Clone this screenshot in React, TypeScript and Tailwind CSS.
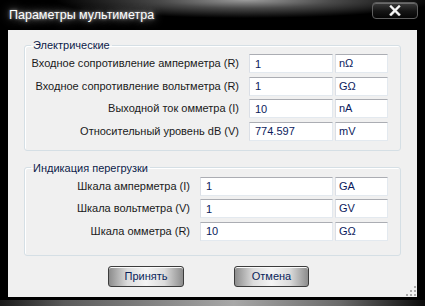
import React from 'react';

const font = "font-['Liberation_Sans',Arial,sans-serif]";

type Row = { label: string; value: string; unit: string };

const electric: Row[] = [
  { label: 'Входное сопротивление амперметра (R)', value: '1', unit: 'nΩ' },
  { label: 'Входное сопротивление вольтметра (R)', value: '1', unit: 'GΩ' },
  { label: 'Выходной ток омметра (I)', value: '10', unit: 'nA' },
  { label: 'Относительный уровень dB (V)', value: '774.597', unit: 'mV' },
];

const overload: Row[] = [
  { label: 'Шкала амперметра (I)', value: '1', unit: 'GA' },
  { label: 'Шкала вольтметра (V)', value: '1', unit: 'GV' },
  { label: 'Шкала омметра (R)', value: '10', unit: 'GΩ' },
];

function Field({ row, labelW, inputW }: { row: Row; labelW: string; inputW: string }) {
  return (
    <div className="flex h-[19px] items-center">
      <div className={`${labelW} shrink-0 whitespace-nowrap text-right text-[#1a1a1a]`}>{row.label}</div>
      <div
        className={`${inputW} ml-[10px] flex h-full shrink-0 items-center border border-[#e3e9ef] border-t-[#abadb3] border-l-[#dbdfe6] bg-white pl-[5px] pt-[1px] text-[#0b1a5c]`}
      >
        {row.value}
      </div>
      <div className="ml-[2px] flex h-full w-[53px] shrink-0 items-start border border-[#e3e9ef] border-t-[#abadb3] border-l-[#dbdfe6] bg-white pl-[3px] text-[#0b1a5c]">
        {row.unit}
      </div>
    </div>
  );
}

function Group({ title, children, className }: { title: string; children: React.ReactNode; className?: string }) {
  return (
    <fieldset className={`rounded-[3px] border border-[#d5dfe5] shadow-[inset_1px_1px_0_#fff] ${className ?? ''}`}>
      <legend className="ml-[6px] px-[2px] leading-[14px] text-[#0d1c4a]">{title}</legend>
      {children}
    </fieldset>
  );
}

function GlassButton({ label, w }: { label: string; w: string }) {
  return (
    <button
      className={`${w} h-[21px] rounded-[3px] border border-[#3c3c3c] bg-[linear-gradient(to_right,#8c8c8c,#dcdcdc_25%,#f4f4f4_50%,#dcdcdc_75%,#8c8c8c)] text-[#0a1e5a] shadow-[inset_0_1px_0_#fafafa]`}
    >
      {label}
    </button>
  );
}

export default function App() {
  return (
    <div className={`${font} flex h-[306px] w-[425px] flex-col overflow-hidden bg-black text-[11px]`}>
      {/* title bar */}
      <div className="flex h-[30px] shrink-0 justify-between bg-[radial-gradient(ellipse_45%_60%_at_58%_0%,#9c9c9c_0%,#4a4a4a_45%,#000_100%)]">
        <div className="flex items-center pl-[9px] text-[12.5px] text-white [text-shadow:0_0_8px_rgba(220,220,220,0.9),0_0_3px_rgba(255,255,255,0.6)]">
          Параметры мультиметра
        </div>
        <button className="mr-[7px] mt-[2px] flex h-[17px] w-[46px] items-center justify-center rounded-[4px] border border-[#5e5e5e] bg-[linear-gradient(to_bottom,#3c3c3c,#141414_55%,#050505)] shadow-[inset_0_1px_0_#6a6a6a]">
          <svg width="12" height="11" viewBox="0 0 12 11">
            <path d="M2 1.5 L10 9.5 M10 1.5 L2 9.5" stroke="#2a2a2a" strokeWidth="4" strokeLinecap="square" />
            <path d="M2 1.5 L10 9.5 M10 1.5 L2 9.5" stroke="#f4f4f4" strokeWidth="2.4" strokeLinecap="square" />
          </svg>
        </button>
      </div>

      {/* client area */}
      <div className="relative mx-[8px] flex h-[267px] shrink-0 flex-col bg-[#f0f0f0] px-[16px] pt-[8px]">
        <Group title="Электрические" className="pb-[9px]">
          <div className="flex flex-col gap-[3.5px] pt-[2px]">
            {electric.map((r) => (
              <Field key={r.label} row={r} labelW="w-[214px]" inputW="w-[84px]" />
            ))}
          </div>
        </Group>

        <Group title="Индикация перегрузки" className="mt-[10px] pb-[14px]">
          <div className="flex flex-col gap-[3.5px] pt-[2px]">
            {overload.map((r) => (
              <Field key={r.label} row={r} labelW="w-[165px]" inputW="w-[133px]" />
            ))}
          </div>
        </Group>

        <div className="mt-[10px] flex gap-[50px] pl-[84px]">
          <GlassButton label="Принять" w="w-[76px]" />
          <GlassButton label="Отмена" w="w-[75px]" />
        </div>

        {/* size grip */}
        <div className="absolute bottom-[1px] right-[1px] grid grid-cols-3 gap-[2px]">
          <span className="h-[2px] w-[2px]" />
          <span className="h-[2px] w-[2px]" />
          <span className="h-[2px] w-[2px] bg-[#a9a9a9]" />
          <span className="h-[2px] w-[2px]" />
          <span className="h-[2px] w-[2px] bg-[#a9a9a9]" />
          <span className="h-[2px] w-[2px] bg-[#a9a9a9]" />
          <span className="h-[2px] w-[2px] bg-[#a9a9a9]" />
          <span className="h-[2px] w-[2px] bg-[#a9a9a9]" />
          <span className="h-[2px] w-[2px] bg-[#a9a9a9]" />
        </div>
      </div>

      {/* bottom frame */}
      <div className="h-[9px] shrink-0 border-t-[3px] border-black bg-[linear-gradient(to_right,#1a1a1a,#5a5a5a_15%,#a8a8a8_55%,#6a6a6a_80%,#0a0a0a)]" />
    </div>
  );
}
